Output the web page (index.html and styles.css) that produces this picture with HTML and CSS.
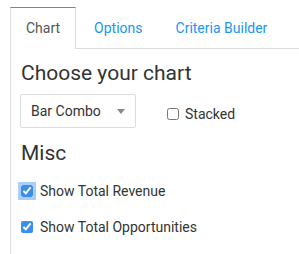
FILE: index.html
```html
<!DOCTYPE html>
<html lang="en">
<head>
    <meta charset="UTF-8" />
    <meta name="viewport" content="width=device-width, initial-scale=1.0" />
    <title>Chart settings</title>
    <link rel="stylesheet" href="styles.css">
</head>
<body>

    <ul class="tabs">
        <li class="tab active">Chart</li>
        <li class="tab">Options</li>
        <li class="tab">Criteria Builder</li>
    </ul>

    <div class="panel">
        <h2>Choose your chart</h2>
        <div class="row">
            <div class="select">
                <span>Bar Combo</span>
                <span class="caret"></span>
            </div>
            <label class="check">
                <input type="checkbox" />
                <span>Stacked</span>
            </label>
        </div>

        <h2 class="misc">Misc</h2>
        <label class="check focused">
            <input type="checkbox" checked />
            <span>Show Total Revenue</span>
        </label>
        <label class="check">
            <input type="checkbox" checked />
            <span>Show Total Opportunities</span>
        </label>
    </div>

</body>
</html>
```

FILE: styles.css
```css
body {
    font-family: Roboto, 'Liberation Sans', sans-serif;
    color: #333;
    background: #fff;
    margin: 0;
    padding: 7px 0 0 10px;
}

.tabs {
    list-style: none;
    margin: 0;
    padding: 0;
    display: flex;
    border-bottom: 1px solid #ddd;
}

.tab {
    font-size: 14px;
    color: #2196f3;
    padding: 13px 14px 13px 17px;
    line-height: 14px;
    border: 1px solid transparent;
    border-bottom: none;
    margin-bottom: -1px;
}

.tab.active {
    color: #555;
    background: #fff;
    border-color: #ddd;
    border-top-color: #4a90d9;
    padding: 13px 15px 14px 15px;
}

.panel {
    border-left: 1px solid #ddd;
    padding: 12px 0 0 10px;
    height: 193px;
}

h2 {
    font-size: 21px;
    font-weight: 400;
    margin: 0 0 9px 0;
    line-height: 24px;
}

.row {
    display: flex;
    align-items: center;
    gap: 31px;
}

.select {
    width: 116px;
    height: 34px;
    border: 1px solid #ddd;
    border-radius: 2px;
    display: flex;
    align-items: center;
    justify-content: space-between;
    padding: 0 10px;
    box-sizing: border-box;
    font-size: 14px;
    margin-left: -1px;
}

.caret {
    width: 0;
    height: 0;
    border-left: 4px solid transparent;
    border-right: 4px solid transparent;
    border-top: 5px solid #888;
}

.check {
    display: flex;
    align-items: center;
    gap: 7px;
    font-size: 14px;
    line-height: 16px;
}

.row .check {
    margin-top: 6px;
    gap: 6px;
}

.check input {
    margin: 0;
    width: 12px;
    height: 12px;
    accent-color: #3b8eea;
}

.misc {
    margin-top: 13px;
    margin-bottom: 18px;
}

.panel > .check {
    margin: 0 0 20px 0;
}

.focused input {
    box-shadow: 0 0 0 3px rgba(66, 146, 240, 0.45);
    border-radius: 3px;
}
```
